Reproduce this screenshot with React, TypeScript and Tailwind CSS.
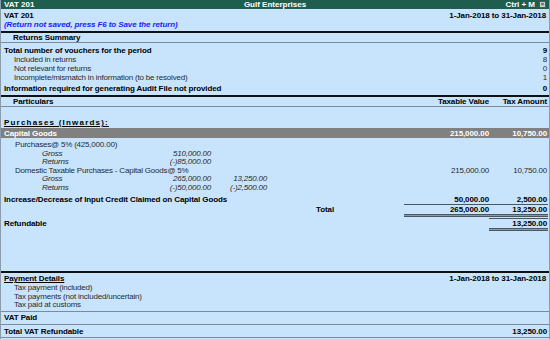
import React from "react";

type RowProps = {
  label?: React.ReactNode;
  sub1?: string;
  sub2?: string;
  c1?: string;
  c2?: string;
  bold?: boolean;
  italic?: boolean;
  indent?: string;
  h?: string;
};

function Row({ label, sub1, sub2, c1, c2, bold, italic, indent = "pl-[3px]", h = "h-[9px]" }: RowProps) {
  return (
    <div
      className={`grid grid-cols-[150px_60px_56px_1fr_86px_58px] pr-[2px] ${h} items-center leading-[9px] ${
        bold ? "font-bold text-black tracking-[-0.1px]" : "text-[#2a2a2a] tracking-[-0.2px]"
      }`}
    >
      <div className={`${indent} whitespace-nowrap ${italic ? "italic" : ""}`}>{label}</div>
      <div className="text-right italic">{sub1}</div>
      <div className="text-right italic">{sub2}</div>
      <div />
      <div className="text-right">{c1}</div>
      <div className="text-right">{c2}</div>
    </div>
  );
}

function Double({ w }: { w: string }) {
  return (
    <div className="flex justify-end pr-[1px]">
      <div className={`${w} h-[3px] border-t border-b border-[#4a5660] bg-[#8a9aa8]`} />
    </div>
  );
}

export default function App() {
  return (
    <div
      className="w-[550px] h-[339px] overflow-hidden bg-[#c8e4fc] text-[8px] flex flex-col border-l border-r border-[#8a9bab]"
      style={{ fontFamily: '"Liberation Sans", Arial, sans-serif' }}
    >
      {/* title bar */}
      <div className="h-[9px] bg-[#1f5e4e] text-white font-bold flex items-center px-[3px] leading-[9px]">
        <div className="flex-1">VAT 201</div>
        <div className="flex-1 text-center">Gulf Enterprises</div>
        <div className="flex-1 flex justify-end items-center gap-[4px]">
          <span>Ctrl + M</span>
          <span className="w-[7px] h-[7px] bg-[#c8d0d0] border border-[#555] text-[#333] text-[6px] leading-[5px] text-center">×</span>
        </div>
      </div>

      <div className="h-[2px]" />
      <div className="flex justify-between font-bold px-[3px] h-[9px] leading-[9px] tracking-[-0.1px]">
        <span>VAT 201</span>
        <span>1-Jan-2018 to 31-Jan-2018</span>
      </div>
      <div className="px-[3px] h-[9px] leading-[9px] italic font-bold text-[#1a1aff] tracking-[-0.1px]">
        (Return not saved, press F6 to Save the return)
      </div>
      <div className="h-[2px]" />
      <div className="h-[2px] bg-[#111]" />
      <div className="h-[9px] leading-[9px] font-bold pl-[12px] tracking-[-0.1px]">Returns Summary</div>
      <div className="h-[1px] bg-[#7d8b98]" />
      <div className="h-[3px]" />

      <Row label="Total number of vouchers for the period" c2="9" bold />
      <Row label="Included in returns" c2="8" indent="pl-[13px]" />
      <Row label="Not relevant for returns" c2="0" indent="pl-[13px]" />
      <Row label="Incomplete/mismatch in information (to be resolved)" c2="1" indent="pl-[13px]" />
      <div className="h-[2px]" />
      <Row label="Information required for generating Audit File not provided" c2="0" bold />
      <div className="h-[2px]" />
      <div className="h-[2px] bg-[#111]" />
      <Row label="Particulars" c1="Taxable Value" c2="Tax Amount" bold indent="pl-[12px]" />
      <div className="h-[1px] bg-[#7d8b98]" />
      <div className="h-[11px]" />
      <div className="h-[9px] leading-[9px] pl-[3px] font-bold">
        <span className="underline tracking-[1.2px]">Purchases (Inwards):</span>
      </div>
      <div className="h-[1px]" />
      <div className="bg-[#808080] text-white">
        <div className="grid grid-cols-[1fr_86px_58px] pr-[2px] h-[10px] items-center leading-[9px] font-bold tracking-[-0.1px]">
          <div className="pl-[3px]">Capital Goods</div>
          <div className="text-right">215,000.00</div>
          <div className="text-right">10,750.00</div>
        </div>
      </div>
      <div className="h-[2px]" />
      <Row label="Purchases@ 5% (425,000.00)" indent="pl-[14px]" h="h-[8.6px]" />
      <Row label="Gross" sub1="510,000.00" italic indent="pl-[41px]" h="h-[8.6px]" />
      <Row label="Returns" sub1="(-)85,000.00" italic indent="pl-[41px]" h="h-[8.6px]" />
      <Row label="Domestic Taxable Purchases - Capital Goods@ 5%" c1="215,000.00" c2="10,750.00" indent="pl-[14px]" h="h-[8.6px]" />
      <Row label="Gross" sub1="265,000.00" sub2="13,250.00" italic indent="pl-[41px]" h="h-[8.6px]" />
      <Row label="Returns" sub1="(-)50,000.00" sub2="(-)2,500.00" italic indent="pl-[41px]" h="h-[8.6px]" />
      <div className="h-[3px]" />
      <Row label="Increase/Decrease of Input Credit Claimed on Capital Goods" c1="50,000.00" c2="2,500.00" bold />
      <div className="flex justify-end pr-[1px]">
        <div className="w-[144px] h-[1px] bg-[#4a5660]" />
      </div>
      <div className="grid grid-cols-[1fr_86px_58px] pr-[2px] h-[9px] leading-[9px] font-bold tracking-[-0.1px]">
        <div className="pl-[315px]">Total</div>
        <div className="text-right">265,000.00</div>
        <div className="text-right">13,250.00</div>
      </div>
      <Double w="w-[144px]" />
      <div className="h-[1px]" />
      <div className="flex justify-end pr-[1px]">
        <div className="w-[59px] h-[1px] bg-[#4a5660]" />
      </div>
      <Row label="Refundable" c2="13,250.00" bold />
      <Double w="w-[59px]" />

      <div className="flex-1" />

      <div className="h-[2px] bg-[#111]" />
      <div className="h-[1px]" />
      <div className="flex justify-between font-bold px-[3px] h-[9px] leading-[9px] tracking-[-0.1px]">
        <span className="underline">Payment Details</span>
        <span>1-Jan-2018 to 31-Jan-2018</span>
      </div>
      <Row label="Tax payment (included)" indent="pl-[13px]" h="h-[8.5px]" />
      <Row label="Tax payments (not included/uncertain)" indent="pl-[13px]" h="h-[8.5px]" />
      <Row label="Tax paid at customs" indent="pl-[13px]" h="h-[8.5px]" />
      <div className="h-[2px]" />
      <div className="h-[1px] bg-[#7d8b98]" />
      <Row label="VAT Paid" bold h="h-[12.5px]" />
      <div className="h-[1px] bg-[#7d8b98]" />
      <Row label="Total VAT Refundable" c2="13,250.00" bold h="h-[12px]" />
      <div className="h-[1px] bg-[#7d8b98]" />
      <div className="h-[1px]" />
    </div>
  );
}
